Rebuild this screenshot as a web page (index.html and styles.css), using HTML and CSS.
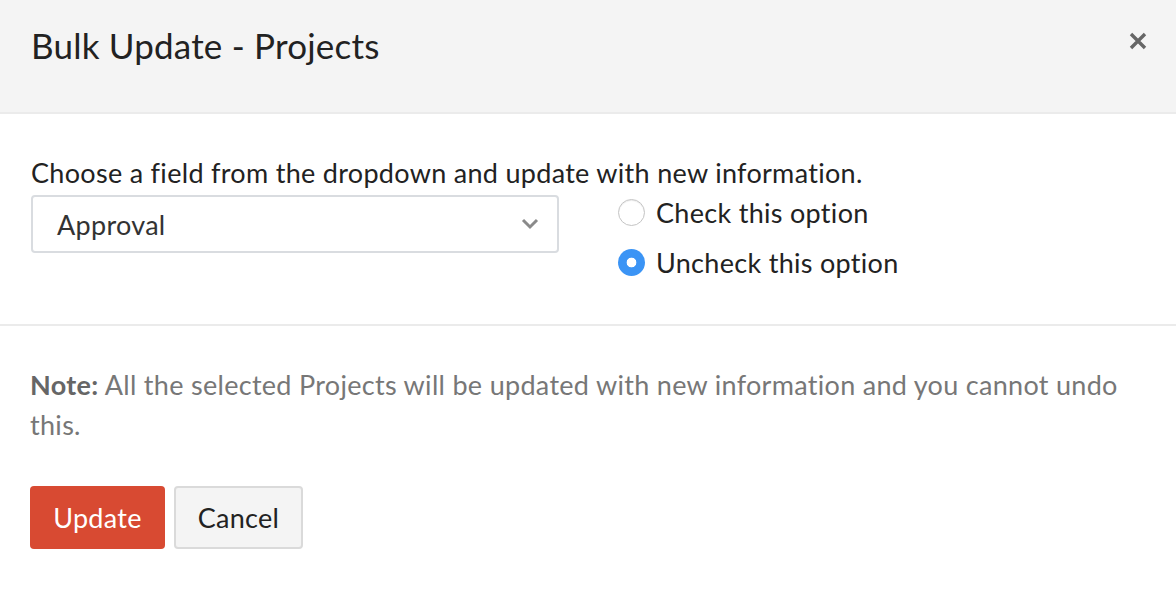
FILE: index.html
```html
<!DOCTYPE html>
<html>
<head>
<meta charset="utf-8">
<link rel="stylesheet" href="styles.css">
</head>
<body>
<div class="modal">
  <div class="header">
    <h1 class="title">Bulk Update - Projects</h1>
    <button class="close" aria-label="Close">
      <svg width="18" height="18" viewBox="0 0 18 18"><path d="M2 2 L16 16 M16 2 L2 16" stroke="#666" stroke-width="3.4" stroke-linecap="butt"/></svg>
    </button>
  </div>
  <div class="body">
    <div class="label">Choose a field from the dropdown and update with new information.</div>
    <div class="row">
      <div class="select">
        <span class="select-text">Approval</span>
        <svg class="chev" width="18" height="12" viewBox="0 0 18 12"><path d="M2 2 L9 9 L16 2" fill="none" stroke="#8a8a8a" stroke-width="3"/></svg>
      </div>
      <div class="radios">
        <label class="radio"><span class="dot"></span>Check this option</label>
        <label class="radio"><span class="dot on"></span>Uncheck this option</label>
      </div>
    </div>
  </div>
  <div class="footer">
    <p class="note"><span class="note-label">Note:</span> All the selected Projects will be updated with new information and you cannot undo this.</p>
    <div class="buttons">
      <button class="btn primary">Update</button>
      <button class="btn secondary">Cancel</button>
    </div>
  </div>
</div>
</body>
</html>
```
FILE: styles.css
```css
html, body { margin: 0; padding: 0; background: #fff; }
body { font-family: Lato, "Open Sans", sans-serif; color: #222; letter-spacing: 0.3px; }
.modal { width: 1176px; height: 602px; background: #fff; }
.header {
  height: 112px; background: #f4f4f4; border-bottom: 2px solid #ebebeb;
  display: flex; align-items: center; justify-content: space-between;
  padding: 0 29px 0 31px; box-sizing: content-box;
}
.title { margin: 0; font-weight: 400; font-size: 35px; color: #222; letter-spacing: 0.2px; padding-bottom: 22px; }
.close { background: none; border: 0; padding: 0; margin-bottom: 30px; display: flex; }
.body { padding: 42px 31px 0; height: 168px; border-bottom: 2px solid #ebebeb; }
.label { font-size: 27px; line-height: 34px; color: #222; }
.row { display: flex; gap: 59px; margin-top: 5px; }
.select {
  width: 528px; height: 58px; box-sizing: border-box; border: 2px solid #d9dce0; border-radius: 4px;
  display: flex; align-items: center; justify-content: space-between; padding: 0 18px 0 24px;
}
.select-text { font-size: 27px; color: #333; }
.radios { display: flex; flex-direction: column; gap: 18px; padding-top: 1px; }
.radio { display: flex; align-items: center; gap: 11px; font-size: 27px; color: #222; height: 32px; }
.dot {
  width: 27px; height: 27px; box-sizing: border-box; border-radius: 50%;
  border: 1.5px solid #c4c4c4; background: #fff; box-shadow: inset 0 1px 1px rgba(0,0,0,0.08);
}
.dot.on { border: 0; background: radial-gradient(circle, #fff 0 4.5px, #3b94f5 5.2px); box-shadow: none; }
.footer { padding: 39px 30px 0; }
.note { margin: 0; font-size: 27px; line-height: 40px; color: #777; }
.note-label { color: #666; font-weight: 700; }
.buttons { display: flex; gap: 9px; margin-top: 41px; }
.btn { font-family: inherit; font-size: 27px; letter-spacing: 0.3px; height: 63px; border-radius: 4px; padding: 0; cursor: pointer; }
.primary { width: 135px; background: #d84a32; color: #fff; border: 0; }
.secondary { width: 129px; background: #f4f4f4; color: #222; border: 2px solid #dadada; }
```
